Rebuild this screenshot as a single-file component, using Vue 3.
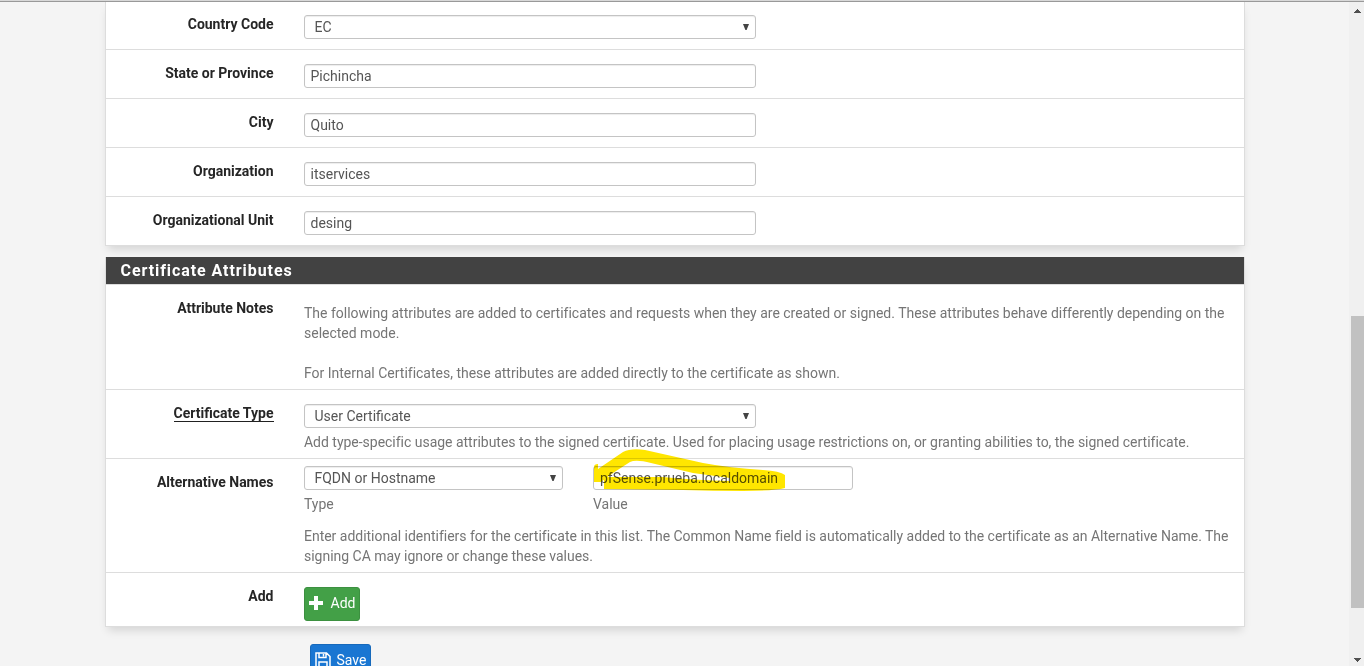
<script setup>
const subjectRows = [
  { label: 'Country Code', value: 'EC', select: true },
  { label: 'State or Province', value: 'Pichincha' },
  { label: 'City', value: 'Quito' },
  { label: 'Organization', value: 'itservices' },
  { label: 'Organizational Unit', value: 'desing' },
]
</script>

<template>
  <div class="screen">
    <div class="topline"></div>
    <main class="content">
      <section class="panel first">
        <div v-for="r in subjectRows" :key="r.label" class="row basic">
          <div class="label">{{ r.label }}</div>
          <div class="field">
            <div class="input" :class="{ select: r.select }">{{ r.value }}<i v-if="r.select" class="caret"></i></div>
          </div>
        </div>
      </section>

      <section class="panel second">
        <h2>Certificate Attributes</h2>
        <div class="row notes">
          <div class="label">Attribute Notes</div>
          <div class="field help">
            The following attributes are added to certificates and requests when they are created or signed. These attributes behave differently depending on the<br />selected mode.<br /><br />For Internal Certificates, these attributes are added directly to the certificate as shown.
          </div>
        </div>
        <div class="row type">
          <div class="label"><span class="required">Certificate Type</span></div>
          <div class="field">
            <div class="input select">User Certificate<i class="caret"></i></div>
            <div class="help under">Add type-specific usage attributes to the signed certificate. Used for placing usage restrictions on, or granting abilities to, the signed certificate.</div>
          </div>
        </div>
        <div class="row alt">
          <div class="label">Alternative Names</div>
          <div class="field">
            <div class="pair">
              <div>
                <div class="input select">FQDN or Hostname<i class="caret"></i></div>
                <div class="help under">Type</div>
              </div>
              <div class="marked">
                <div class="input">pfSense.prueba.localdomain</div>
                <div class="help under">Value</div>
                <svg class="marker" width="200" height="50" viewBox="0 0 200 50">
                  <path fill="#ffe600" d="M1 19Q1 16 5 16V21L30 4Q38 0 52 2L110 15Q137 20 170 22Q187 23 192 27V40Q180 43 150 43Q120 43 90 42L11 41V29H70Q100 32 137 33V30L100 25L58 15Q43 11 37 14L20 25L8 34H1Z" />
                </svg>
              </div>
            </div>
            <div class="help alt-text">Enter additional identifiers for the certificate in this list. The Common Name field is automatically added to the certificate as an Alternative Name. The<br />signing CA may ignore or change these values.</div>
          </div>
        </div>
        <div class="row add">
          <div class="label">Add</div>
          <div class="field">
            <button class="btn green">
              <svg width="14" height="14" viewBox="0 0 14 14"><path fill="#fff" d="M5 0h4v5h5v4H9v5H5V9H0V5h5z" /></svg>
              <span>Add</span>
            </button>
          </div>
        </div>
      </section>
      <button class="btn blue">
        <svg width="16" height="16" viewBox="0 0 16 16"><path fill="none" stroke="#fff" stroke-width="1.500" d="M1 1h10.500L15 4.500V15H1zM4 1v4.500h7V1M4 15v-5h8v5M8.500 2v2.500" /></svg>
        <span>Save</span>
      </button>
    </main>
    <aside class="scrollbar">
      <svg class="up" width="7" height="4" viewBox="0 0 7 4"><path fill="#505050" d="M3 0h1v1h1v1h1v1h1v1H0V3h1V2h1V1h1z" /></svg>
      <div class="thumb"></div>
      <svg class="down" width="7" height="4" viewBox="0 0 7 4"><path fill="#505050" d="M0 0h7v1H6v1H5v1H4v1H3V3H2V2H1V1H0z" /></svg>
    </aside>
  </div>
</template>

<style>
body { margin: 0; overflow: hidden; }
</style>

<style scoped>
* { box-sizing: border-box; }
.screen {
  position: relative;
  display: flex;
  width: 1364px;
  height: 666px;
  overflow: hidden;
  background: #f4f4f4;
  color: #262626;
  font: 14px/20px Roboto, sans-serif;
}
.topline {
  position: absolute;
  inset: 0 0 auto;
  height: 2px;
  z-index: 3;
  background: #d8d8d8;
  border-bottom: 1px solid #999;
}
.content { width: 1140px; margin-left: 105px; padding-top: 1px; }
.panel {
  border: 1px solid #ddd;
  border-top: 0;
  background: #fff;
  box-shadow: 0 6px 9px -3px rgba(0, 0, 0, 0.14);
}
.second { margin-top: 11px; }
h2 {
  height: 28px;
  margin: 0;
  padding-left: 14.5px;
  border-bottom: 1px solid #ddd;
  background: #424242;
  color: #fff;
  font-size: 16px;
  line-height: 28px;
  font-weight: 700;
  letter-spacing: 0.93px;
}
.row { display: flex; border-bottom: 1px solid #ddd; }
.row:last-child { border-bottom: 0; }
.label { width: 167.5px; padding-top: 13px; text-align: right; font-weight: 700; flex: none; }
.field { margin-left: 30.5px; padding-top: 14px; flex: 1; }
.basic { height: 49px; }
.basic:last-child { height: 48px; }
.notes { height: 105px; }
.notes .field { padding-top: 18px; letter-spacing: -0.007px; }
.type { height: 69px; }
.alt { height: 114px; }
.alt .field { padding-top: 7px; }
.add { height: 53px; }
.input {
  position: relative;
  width: 452px;
  height: 24px;
  padding-left: 5.5px;
  border: 1px solid #c4c4c4;
  border-radius: 3px;
  background: #fff;
  box-shadow: inset 0 1px 1px rgba(0, 0, 0, 0.075);
  color: #555;
  line-height: 23px;
}
.select { padding-left: 9.5px; }
.caret {
  position: absolute;
  right: 6px;
  top: 8px;
  width: 6px;
  height: 6px;
  background: #444;
  clip-path: polygon(0 0, 100% 0, 60% 100%, 40% 100%);
}
.help { color: #757575; white-space: nowrap; letter-spacing: -0.018px; }
.under { padding-top: 4px; }
.pair { display: flex; gap: 30px; }
.pair .input { width: 260px; }
.pair > :first-child .input { width: 259px; }
.marked { position: relative; }
.marked .input { padding-left: 6px; }
.marker { position: absolute; left: 0; top: -18px; mix-blend-mode: multiply; }
.alt-text { padding-top: 12px; }
.required { display: inline-block; height: 19px; border-bottom: 1px solid #212121; }
.btn {
  display: flex;
  align-items: center;
  gap: 8px;
  height: 34px;
  padding: 0 3px 2px 3.5px;
  border: 1px solid;
  border-radius: 3px;
  color: #fff;
  font: 14px/20px Roboto, sans-serif;
}
.green { width: 56px; background: #43a047; border-color: #3c9040; }
.blue { width: 61px; margin: 17px 0 0 205px; background: #1976d2; border-color: #1669bb; gap: 6px; }
.btn span { flex: none; }
.btn svg { flex: none; }
.scrollbar { position: relative; width: 15px; margin-left: auto; background: #f0f0f0; }
.thumb { height: 292px; margin: 316px 0 0 2px; background: #c1c1c1; }
.up, .down { position: absolute; left: 5px; }
.up { top: 9px; }
.down { bottom: 4px; }
</style>
